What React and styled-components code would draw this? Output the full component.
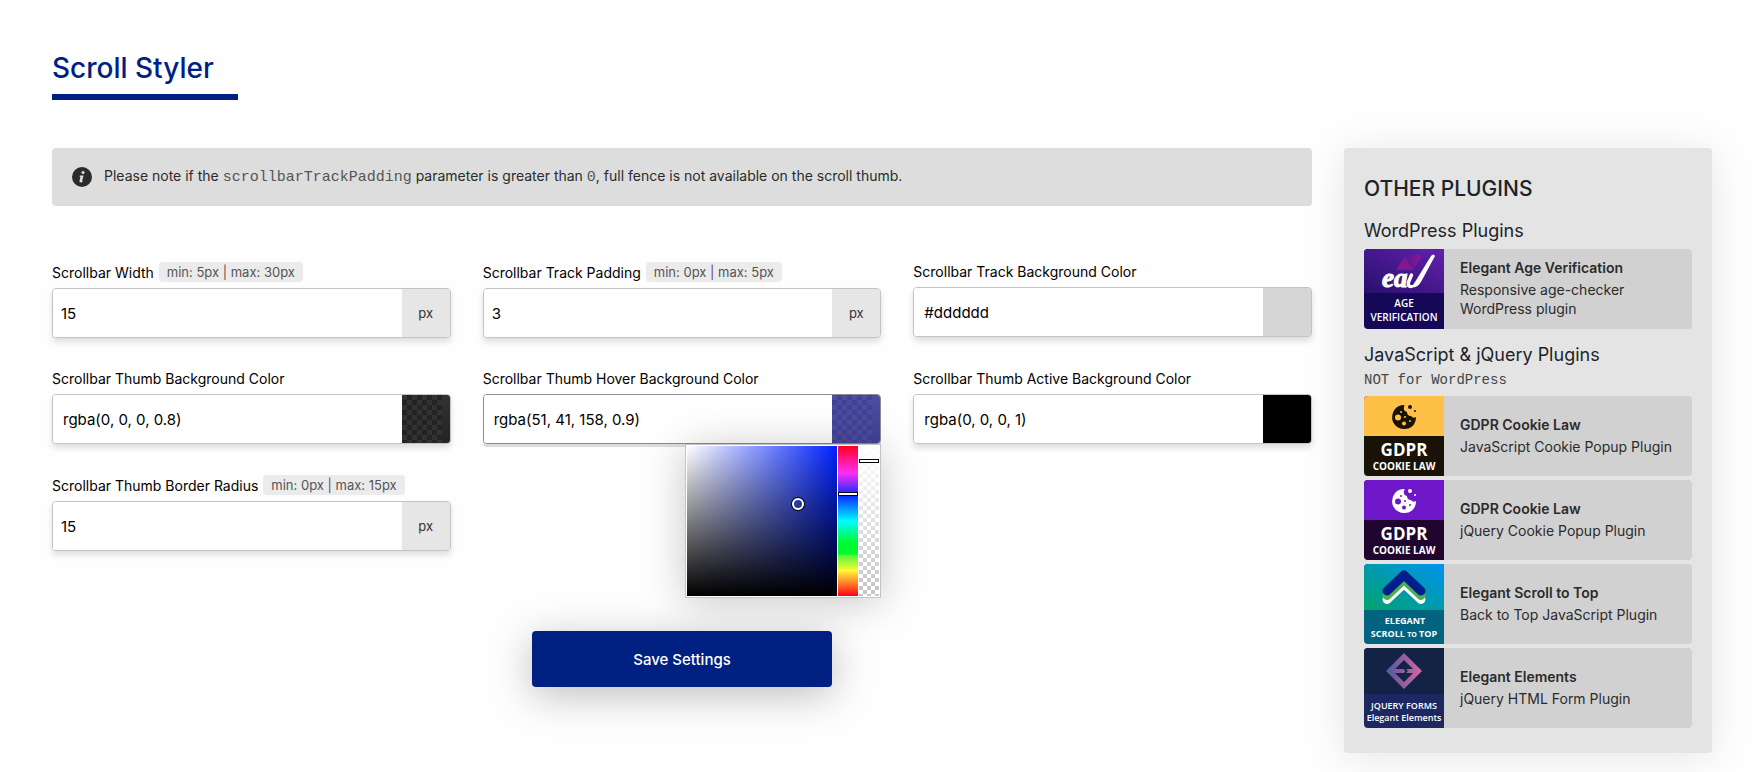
import React, { useId, useState } from "react";
import styled, { createGlobalStyle, css } from "styled-components";

const GlobalStyle = createGlobalStyle`
  *, *::before, *::after { box-sizing: border-box; }
  body {
    margin: 0;
    background: #fefefe;
    color: #000;
    font-family: Inter, "Liberation Sans", sans-serif;
    font-size: 14px;
  }
`;

const Page = styled.div`
  padding: 48px 48px 19px 52px;
`;

const Title = styled.h1`
  display: inline-block;
  margin: 0 0 48px;
  padding: 0 24px 6px 0;
  border-bottom: 6px solid #001f82;
  color: #001f82;
  font-size: 28px;
  font-weight: 500;
  line-height: 40px;
`;

const Columns = styled.div`
  display: grid;
  grid-template-columns: minmax(0, 1fr) 368px;
  gap: 32px;
  align-items: start;
`;

const Notice = styled.p`
  display: flex;
  align-items: center;
  gap: 12px;
  min-height: 58px;
  margin: 0 0 56px;
  padding: 8px 20px;
  border-radius: 4px;
  background: #ddd;
  color: #2b2b2b;
  line-height: 18px;

  svg { flex: none; }
`;

const Code = styled.code`
  color: #555;
  font-family: "Liberation Mono", monospace;
  font-size: 15px;
`;

const Form = styled.form`
  display: flex;
  flex-direction: column;
`;

const Fields = styled.div`
  display: grid;
  grid-template-columns: repeat(3, minmax(0, 1fr));
  gap: 31px 32px;
`;

const Field = styled.div`
  display: flex;
  flex-direction: column;
  gap: 6px;
`;

const Caption = styled.div`
  display: flex;
  align-items: center;
  gap: 5px;
  line-height: 19px;
  white-space: nowrap;
`;

const Range = styled.span`
  padding: 0 8px;
  border-radius: 4px;
  background: #ebebeb;
  color: #555;
  font-size: 13px;
  line-height: 20px;
`;

const Control = styled.div`
  position: relative;
  display: flex;
  height: 50px;
  border: 1px solid ${(p) => (p.$active ? "#8c8c8c" : "#c3c3c3")};
  border-radius: 4px;
  background: #fff;
  box-shadow: ${(p) => (p.$active ? "0 3px 0 #dcdcdc" : "0 4px 6px rgba(0, 0, 0, 0.13)")};
`;

const TextInput = styled.input`
  flex: 1;
  min-width: 0;
  padding: 0 ${(p) => (p.$wide ? 10 : 8)}px;
  border: 0;
  outline: 0;
  border-radius: 3px 0 0 3px;
  background: #fff;
  color: #000;
  font: 400 15px Inter, "Liberation Sans", sans-serif;
`;

const Unit = styled.span`
  display: flex;
  align-items: center;
  justify-content: center;
  width: 48px;
  border-radius: 0 3px 3px 0;
  background: #e6e6e6;
  color: #333;
  font-size: 13px;
`;

const Swatch = styled.button`
  width: 48px;
  padding: 0;
  border: 0;
  border-radius: 0 3px 3px 0;
  cursor: pointer;
  background: ${(p) => p.$base};
  ${(p) =>
    p.$check &&
    css`
      background:
        linear-gradient(${p.$check[1]}, ${p.$check[0]}) right / 8px 100% no-repeat,
        conic-gradient(${p.$check[0]} 25%, ${p.$check[1]} 0 50%, ${p.$check[0]} 0 75%, ${p.$check[1]} 0)
          0 0 / 10px 10px;
    `}
`;

const Picker = styled.div`
  position: absolute;
  z-index: 2;
  top: calc(100% + 1px);
  right: -1px;
  display: flex;
  gap: 1px;
  padding: 1px;
  border: 1px solid #c3c3c3;
  background: #fff;
  box-shadow: 0 4px 40px rgba(0, 0, 0, 0.22);
`;

const Shade = styled.div`
  position: relative;
  width: 150px;
  height: 150px;
  background:
    linear-gradient(transparent, #000),
    linear-gradient(90deg, #fff, #0022ff);
`;

const ShadeHandle = styled.button`
  position: absolute;
  top: 52px;
  left: 105px;
  width: 12px;
  height: 12px;
  padding: 0;
  border: 2px solid #fff;
  border-radius: 50%;
  background: transparent;
  box-shadow: 0 0 0 1px #000;
`;

const thumb = css`
  appearance: none;
  -webkit-appearance: none;
  box-sizing: border-box;
  width: 20px;
  height: 4px;
  border: 1px solid #000;
  border-radius: 0;
  background: #fff;
`;

const Strip = styled.input`
  appearance: none;
  -webkit-appearance: none;
  writing-mode: vertical-lr;
  width: 20px;
  height: 150px;
  margin: 0;
  outline: 0;
  background: ${(p) =>
    p.$alpha
      ? "linear-gradient(#fff, rgba(255, 255, 255, 0)), conic-gradient(#c4c4c4 25%, #fff 0 50%, #c4c4c4 0 75%, #fff 0) 0 0 / 8px 8px"
      : "linear-gradient(#ff0022, #ff2df5 18%, #0a2bff 33%, #00fbff 50%, #00fa36 64%, #00fb2c 72%, #55f838 73%, #fff937 83%, #ff0018)"};

  &::-webkit-slider-thumb { ${thumb} }
  &::-moz-range-thumb { ${thumb} }
`;

const SaveButton = styled.button`
  align-self: center;
  width: 300px;
  height: 56px;
  margin-top: 80px;
  border: 0;
  border-radius: 4px;
  background: #002082;
  color: #fff;
  box-shadow: 0 8px 40px rgba(0, 0, 0, 0.26);
  font: 500 15px Inter, "Liberation Sans", sans-serif;
  cursor: pointer;
`;

const Sidebar = styled.aside`
  padding: 25px 20px;
  border-radius: 4px;
  background: #e4e4e4;
  color: #1d2327;
  box-shadow: 0 4px 40px rgba(0, 0, 0, 0.1);
`;

const SideTitle = styled.h2`
  margin: 0 0 12px;
  font-size: 21px;
  font-weight: 500;
  line-height: 32px;
  text-transform: uppercase;
`;

const GroupTitle = styled.h3`
  margin: 0 0 ${(p) => (p.$noted ? 3 : 4)}px;
  font-size: 18px;
  font-weight: 400;
  line-height: 28px;
`;

const GroupNote = styled.p`
  margin: 0 0 8px;
  color: #444;
  font: 14px/16px "Liberation Mono", monospace;
`;

const CardList = styled.div`
  display: flex;
  flex-direction: column;
  gap: 4px;

  & + h3 { margin-top: 12px; }
`;

const Card = styled.a`
  display: flex;
  height: 80px;
  overflow: hidden;
  border-radius: 4px;
  background: #d1d1d1;
  color: #2b2b2b;
  text-decoration: none;

  svg { flex: none; }
`;

const CardText = styled.span`
  display: flex;
  flex-direction: column;
  justify-content: center;
  gap: 2px;
  padding: 0 16px 2px;
  line-height: 19px;
`;

const CardTitle = styled.strong`
  font-weight: 600;
  line-height: 20px;
`;

const LogoText = styled.text`
  fill: #fff;
  font-family: "Open Sans", "Noto Sans", sans-serif;
  font-size: ${(p) => p.$size}px;
  font-weight: ${(p) => p.$weight || 700};
  text-anchor: middle;
`;

const InfoIcon = () => (
  <svg width="20" height="20" viewBox="0 0 20 20" aria-hidden="true">
    <circle cx="10" cy="10" r="10" fill="#2b2b2b" />
    <circle cx="11" cy="5.4" r="1.5" fill="#ddd" />
    <path d="M8 8.4h3.6l-1.4 5.2q-.1.8 1.2.2-1.2 1.8-2.8 1.8-1.5-.1-1.1-1.8l1-3.9-1-.2z" fill="#ddd" />
  </svg>
);

const AgeLogo = () => (
  <svg width="80" height="80" viewBox="0 0 80 80" aria-hidden="true">
    <defs>
      <linearGradient id="age-bg" x1="0" y1="1" x2="1" y2="0">
        <stop offset="0" stopColor="#26106b" />
        <stop offset="1" stopColor="#6420ae" />
      </linearGradient>
      <linearGradient id="age-tri" x1="0" y1="0" x2="1" y2="0">
        <stop offset="0" stopColor="#5c1590" />
        <stop offset="1" stopColor="#8d189c" />
      </linearGradient>
    </defs>
    <rect width="80" height="80" fill="#150957" />
    <rect width="80" height="44" fill="url(#age-bg)" />
    <path d="M41 8 50 21H34q-2 0-1-2z" fill="#84178f" />
    <path d="M42 6H55q3 0 2 2L50 20Z" fill="url(#age-tri)" />
    <text x="18" y="38" fill="#fff" stroke="#fff" strokeWidth="1" fontFamily="Liberation Serif, serif" fontStyle="italic" fontWeight="700" fontSize="27">ea</text>
    <path d="M47.500 26 44.500 33Q43.500 37.500 47 37.500" fill="none" stroke="#fff" strokeWidth="3.500" strokeLinecap="round" />
    <path d="M45 38.500Q49 37 51 33L67 7q2.500-3 4 0L57.500 32Q54 38.500 49 38.500Z" fill="#fff" />
    <LogoText x="40" y="58" $size={10} $weight={600}>AGE</LogoText>
    <LogoText x="40" y="72" $size={10} $weight={600}>VERIFICATION</LogoText>
  </svg>
);

const CookieLogo = ({ top, bottom, cookie }) => (
  <svg width="80" height="80" viewBox="0 0 80 80" aria-hidden="true">
    <rect width="80" height="80" fill={bottom} />
    <rect width="80" height="40" fill={top} />
    <path
      d="M40 9Q41 9 40 11 39 15 43 16 43 20 47 20 49 23 52 21 52 27 48 30.500 44.500 33.500 39 33 32 32 29 26 26.500 19 31 13 34.500 9 40 9Z"
      fill={cookie}
    />
    <g fill={top}>
      <circle cx="34" cy="21.500" r="3" />
      <circle cx="40" cy="27.500" r="2" />
      <circle cx="37" cy="16" r="1" />
      <circle cx="41" cy="21" r="1" />
      <circle cx="46" cy="25" r="1" />
    </g>
    <circle cx="46" cy="11" r="2" fill={cookie} />
    <circle cx="51" cy="15" r="1" fill={cookie} />
    <LogoText x="40" y="60" $size={17}>GDPR</LogoText>
    <LogoText x="40" y="74" $size={10}>COOKIE LAW</LogoText>
  </svg>
);

const ScrollLogo = () => (
  <svg width="80" height="80" viewBox="0 0 80 80" aria-hidden="true">
    <defs>
      <linearGradient id="scroll-bg" x1="0" y1="1" x2="1" y2="0">
        <stop offset="0" stopColor="#00a36c" />
        <stop offset="1" stopColor="#0092f0" />
      </linearGradient>
    </defs>
    <rect width="80" height="80" fill="#00637f" />
    <rect width="80" height="46" fill="url(#scroll-bg)" />
    <g fill="none" strokeWidth="9" strokeLinecap="round" strokeLinejoin="round">
      <path d="M23 35.500 40 19.500 57 35.500" stroke="#fff" />
      <path d="M23 31.500 40 15.500 57 31.500" stroke="#4caf50" />
      <path d="M23 27 40 11 57 27" stroke="#001f8c" />
    </g>
    <LogoText x="41" y="60" $size={9}>ELEGANT</LogoText>
    <LogoText x="40" y="73" $size={9}>
      SCROLL <tspan fontSize="7">TO</tspan> TOP
    </LogoText>
  </svg>
);

const ElementsLogo = () => (
  <svg width="80" height="80" viewBox="0 0 80 80" aria-hidden="true">
    <defs>
      <linearGradient id="elements-fg" x1="22" y1="0" x2="58" y2="0" gradientUnits="userSpaceOnUse">
        <stop offset="0" stopColor="#5058a0" />
        <stop offset="1" stopColor="#d9669f" />
      </linearGradient>
    </defs>
    <rect width="80" height="80" fill="#1d2862" />
    <rect width="80" height="46" fill="#122345" />
    <path
      fill="url(#elements-fg)"
      fillRule="evenodd"
      d="M40 5 58 23 40 41 22 23ZM40 12 31 21H38Q41 21 41 23T38 25H31L40 34 49 25H42L44 23 42 21H49Z"
    />
    <LogoText x="40" y="61" $size={9} $weight={600}>JQUERY FORMS</LogoText>
    <LogoText x="40" y="73" $size={9} $weight={600}>Elegant Elements</LogoText>
  </svg>
);

function NumberField({ label, range, value }) {
  const id = useId();
  return (
    <Field>
      <Caption>
        <label htmlFor={id}>{label}</label>
        <Range>{range}</Range>
      </Caption>
      <Control>
        <TextInput id={id} defaultValue={value} inputMode="numeric" />
        <Unit>px</Unit>
      </Control>
    </Field>
  );
}

function ColorPicker() {
  return (
    <Picker>
      <Shade>
        <ShadeHandle type="button" aria-label="Saturation and brightness" />
      </Shade>
      <Strip type="range" aria-label="Hue" min="0" max="146" defaultValue="46" />
      <Strip type="range" aria-label="Opacity" min="0" max="146" defaultValue="13" $alpha />
    </Picker>
  );
}

function ColorField({ label, value, base, check, initiallyOpen = false }) {
  const id = useId();
  const [open, setOpen] = useState(initiallyOpen);
  return (
    <Field>
      <Caption>
        <label htmlFor={id}>{label}</label>
      </Caption>
      <Control $active={open}>
        <TextInput id={id} defaultValue={value} $wide />
        <Swatch
          type="button"
          aria-label={`Pick ${label}`}
          $base={base}
          $check={check}
          onClick={() => setOpen(!open)}
        />
        {open && <ColorPicker />}
      </Control>
    </Field>
  );
}

function PluginCard({ logo, title, children }) {
  return (
    <Card href="#">
      {logo}
      <CardText>
        <CardTitle>{title}</CardTitle>
        <span>{children}</span>
      </CardText>
    </Card>
  );
}

export default function App() {
  return (
    <Page>
      <GlobalStyle />
      <Title>Scroll Styler</Title>
      <Columns>
        <main>
          <Notice>
            <InfoIcon />
            <span>
              Please note if the <Code>scrollbarTrackPadding</Code> parameter is greater than <Code>0</Code>, full
              fence is not available on the scroll thumb.
            </span>
          </Notice>
          <Form onSubmit={(e) => e.preventDefault()}>
            <Fields>
              <NumberField label="Scrollbar Width" range="min: 5px | max: 30px" value="15" />
              <NumberField label="Scrollbar Track Padding" range="min: 0px | max: 5px" value="3" />
              <ColorField label="Scrollbar Track Background Color" value="#dddddd" base="#d6d6d6" />
              <ColorField
                label="Scrollbar Thumb Background Color"
                value="rgba(0, 0, 0, 0.8)"
                check={["#232323", "#323232"]}
              />
              <ColorField
                label="Scrollbar Thumb Hover Background Color"
                value="rgba(51, 41, 158, 0.9)"
                check={["#424294", "#4c4ca2"]}
                initiallyOpen
              />
              <ColorField label="Scrollbar Thumb Active Background Color" value="rgba(0, 0, 0, 1)" base="#000" />
              <NumberField label="Scrollbar Thumb Border Radius" range="min: 0px | max: 15px" value="15" />
            </Fields>
            <SaveButton type="submit">Save Settings</SaveButton>
          </Form>
        </main>
        <Sidebar>
          <SideTitle>Other Plugins</SideTitle>
          <GroupTitle>WordPress Plugins</GroupTitle>
          <CardList>
            <PluginCard logo={<AgeLogo />} title="Elegant Age Verification">
              Responsive age-checker WordPress plugin
            </PluginCard>
          </CardList>
          <GroupTitle $noted>JavaScript &amp; jQuery Plugins</GroupTitle>
          <GroupNote>NOT for WordPress</GroupNote>
          <CardList>
            <PluginCard logo={<CookieLogo top="#ffc048" bottom="#191206" cookie="#191206" />} title="GDPR Cookie Law">
              JavaScript Cookie Popup Plugin
            </PluginCard>
            <PluginCard logo={<CookieLogo top="#6d17c8" bottom="#20052f" cookie="#fff" />} title="GDPR Cookie Law">
              jQuery Cookie Popup Plugin
            </PluginCard>
            <PluginCard logo={<ScrollLogo />} title="Elegant Scroll to Top">
              Back to Top JavaScript Plugin
            </PluginCard>
            <PluginCard logo={<ElementsLogo />} title="Elegant Elements">
              jQuery HTML Form Plugin
            </PluginCard>
          </CardList>
        </Sidebar>
      </Columns>
    </Page>
  );
}
